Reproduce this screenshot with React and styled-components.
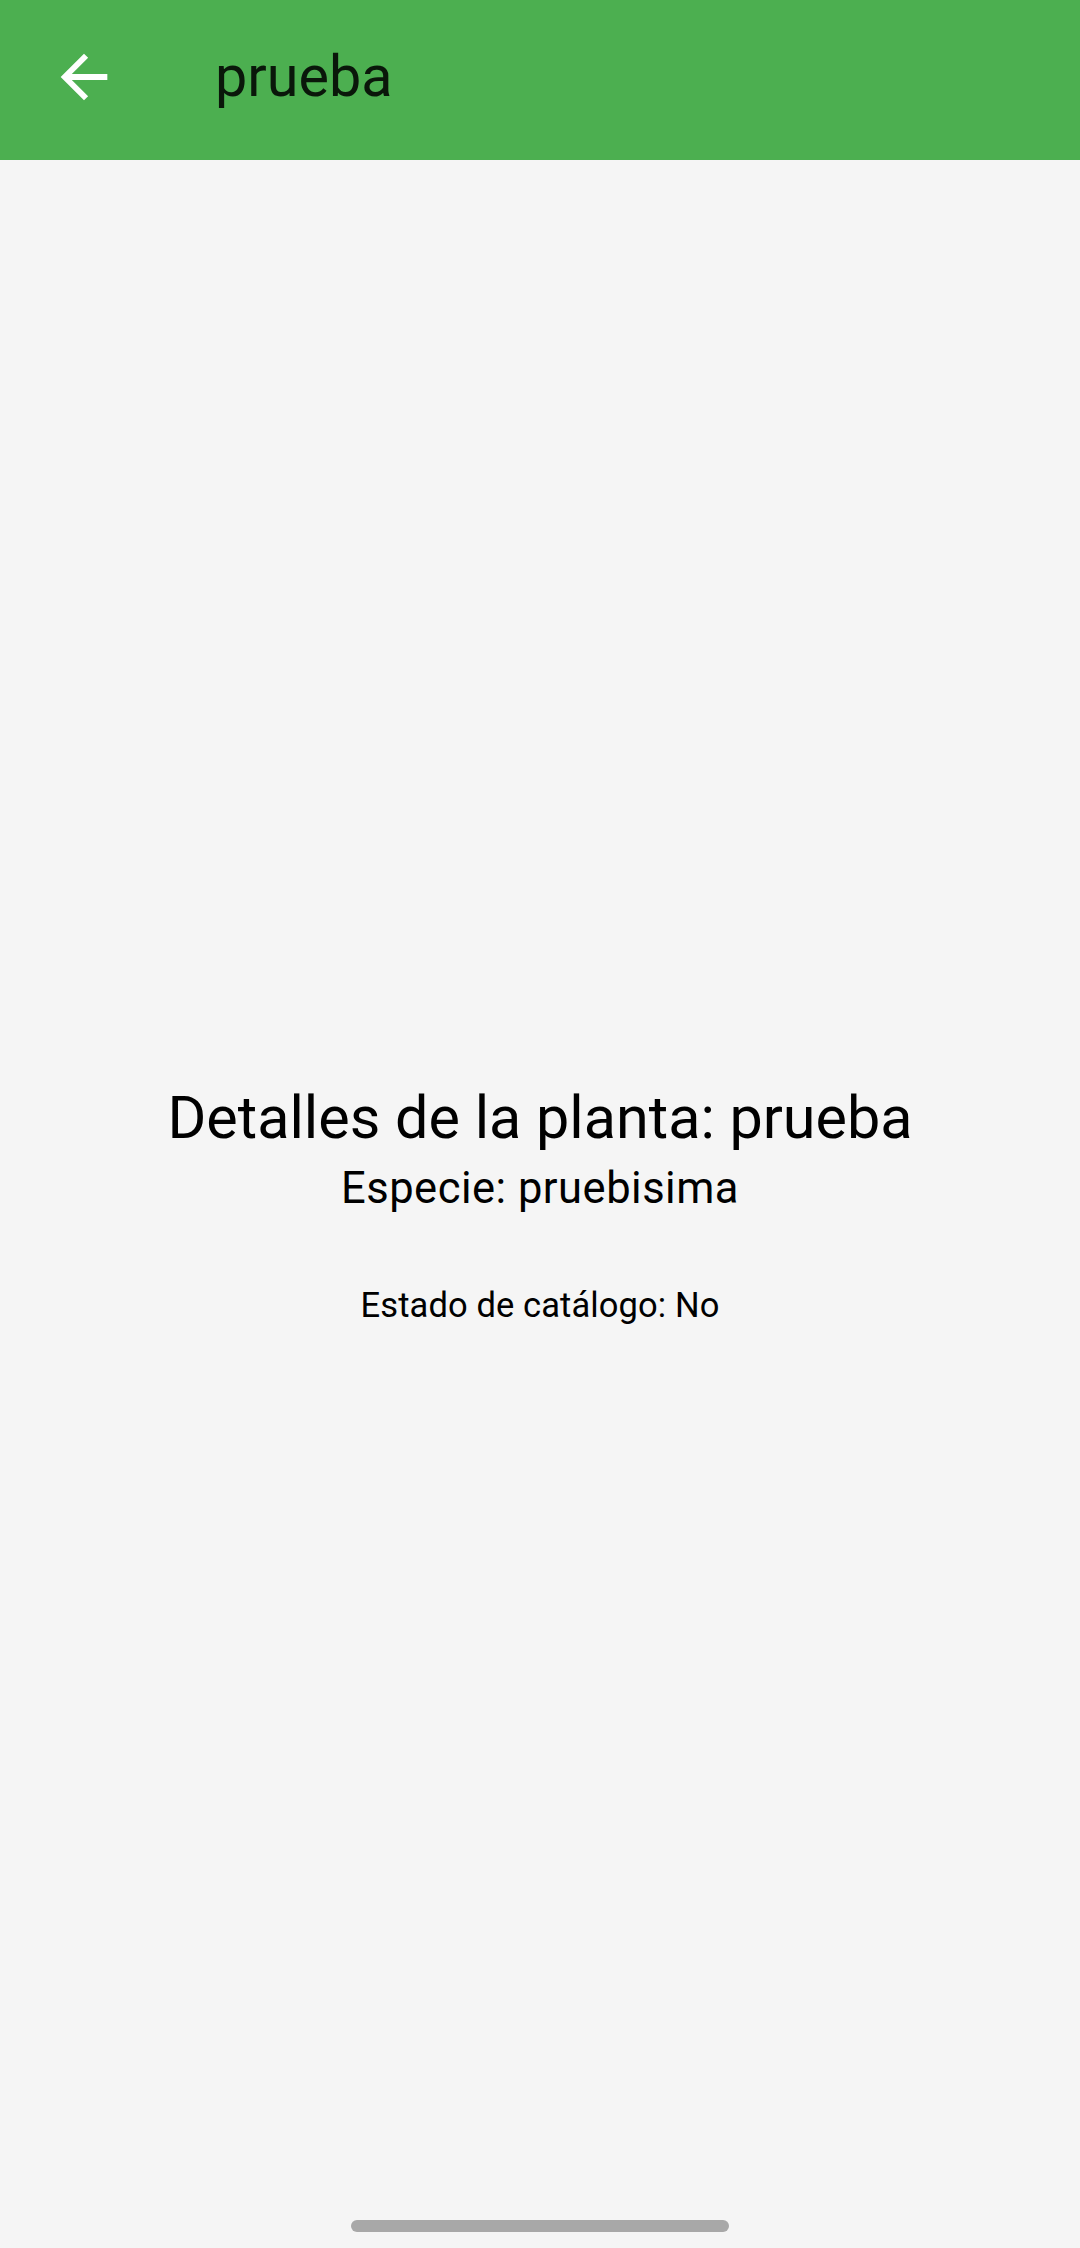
import React from 'react'
import styled, { createGlobalStyle } from 'styled-components'

const GlobalStyle = createGlobalStyle`
  html, body {
    margin: 0;
    padding: 0;
    background: #f5f5f5;
    font-family: Roboto, "Noto Sans", "Liberation Sans", sans-serif;
  }
`

const Screen = styled.div`
  position: relative;
  display: flex;
  flex-direction: column;
  width: 1080px;
  height: 2248px;
  background: #f5f5f5;
  overflow: hidden;
`

const AppBar = styled.header`
  display: flex;
  align-items: center;
  height: 160px;
  padding: 0 0 6px 49px;
  box-sizing: border-box;
  background: #4caf50;
  flex-shrink: 0;
`

const BackButton = styled.button`
  display: flex;
  align-items: center;
  justify-content: center;
  width: 70px;
  height: 70px;
  padding: 0;
  border: none;
  background: transparent;
  color: #fff;
  cursor: pointer;
`

const Title = styled.h1`
  margin: 0 0 0 96px;
  font-size: 57.5px;
  line-height: 56px;
  font-weight: 400;
  color: rgba(0, 0, 0, 0.87);
`

const Body = styled.main`
  flex: 1;
  display: flex;
  flex-direction: column;
  align-items: center;
  justify-content: center;
  color: #000;
`

const Line = styled.p`
  margin: ${({ $gap }) => $gap || 0}px 0 0;
  font-size: ${({ $size }) => $size}px;
  line-height: 1.2;
  letter-spacing: ${({ $spacing }) => $spacing || 0}px;
  font-weight: 400;
  text-align: center;
`

const HomeBar = styled.div`
  position: absolute;
  left: 351px;
  bottom: 16px;
  width: 378px;
  height: 12px;
  border-radius: 6px;
  background: #a8a8a8;
`

const ArrowBack = () => (
  <svg width="70" height="70" viewBox="0 0 24 24" fill="currentColor">
    <path d="M20 11H7.83l5.59-5.59L12 4l-8 8 8 8 1.41-1.41L7.83 13H20v-2z" />
  </svg>
)

export default function App() {
  const plant = { name: 'prueba', species: 'pruebisima', catalog: 'No' }

  return (
    <>
      <GlobalStyle />
      <Screen>
        <AppBar>
          <BackButton aria-label="back">
            <ArrowBack />
          </BackButton>
          <Title>{plant.name}</Title>
        </AppBar>
        <Body>
          <Line $size={59.3}>Detalles de la planta: {plant.name}</Line>
          <Line $size={43.5} $spacing={0.5} $gap={10}>Especie: {plant.species}</Line>
          <Line $size={34.5} $spacing={0.1} $gap={70}>Estado de catálogo: {plant.catalog}</Line>
        </Body>
        <HomeBar />
      </Screen>
    </>
  )
}
